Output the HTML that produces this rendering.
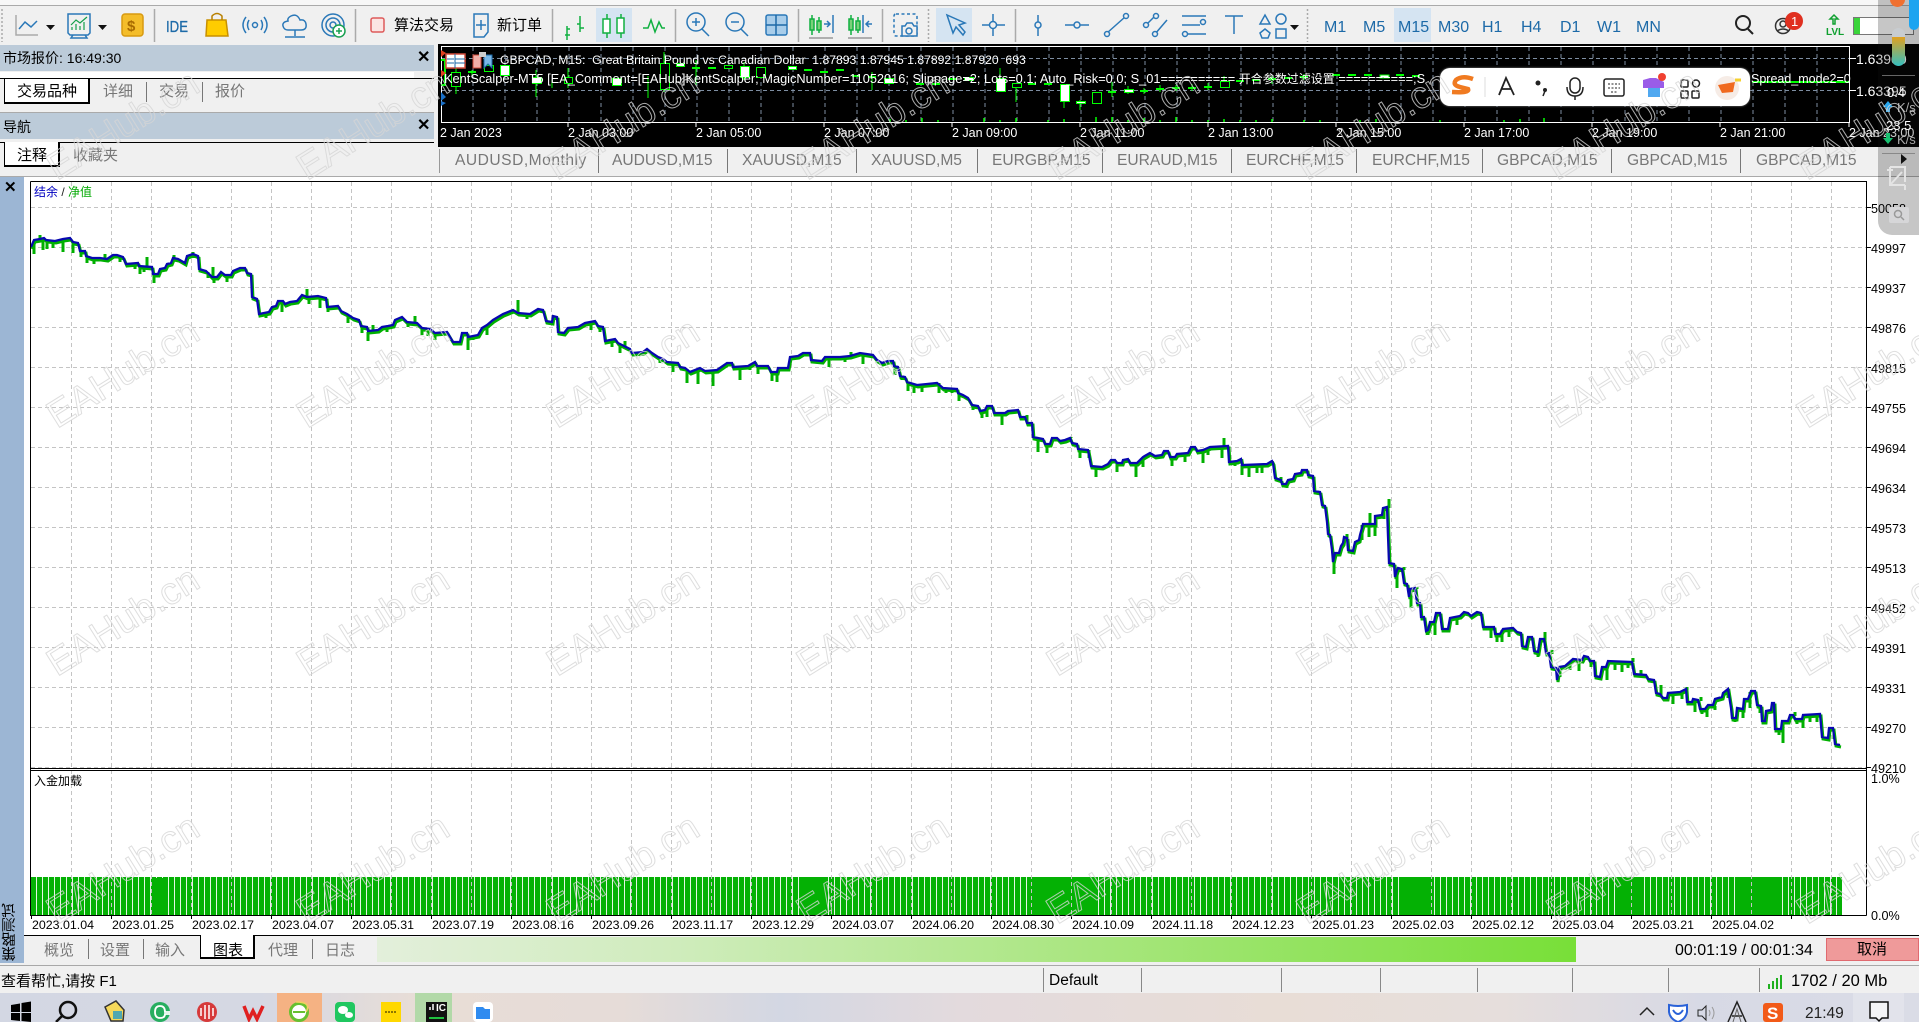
<!DOCTYPE html>
<html lang="zh"><head><meta charset="utf-8"><title>MT5 策略测试</title>
<style>
html,body{margin:0;padding:0;width:1919px;height:1022px;overflow:hidden;background:#f0f0f0}
body{position:relative;font-family:"Liberation Sans","Noto Sans CJK SC",sans-serif;color:#000}
.a{position:absolute}
.t{position:absolute;white-space:nowrap;line-height:1}
.h{position:absolute;left:0;width:434px;height:26px;background:#bccbd9}
.g{color:#777;font-size:15px}
.k{color:#777;font-size:15.600px}
.s{position:absolute;width:1px;background:#777}
.tab{position:absolute;background:#fff;border-right:2px solid #000;border-bottom:2px solid #000;border-left:1px solid #000;box-sizing:border-box}
.tf{font-size:16px;color:#1d6aa8}
.d{font-size:12.400px}
.y{font-size:12.600px;left:1871px}
.c{font-size:12.500px;color:#fff}
svg{position:absolute;overflow:visible}
</style></head><body>

<!-- top strip -->
<div class="a" style="left:0;top:0;width:1919px;height:5px;background:#f7f7f7"></div>
<div class="a" style="left:0;top:5px;width:1919px;height:1px;background:#aaa"></div>

<!-- left panels -->
<div class="h" style="top:45px"></div>
<div class="t" style="left:3px;top:51px;font-size:14px">市场报价: 16:49:30</div>
<div class="t" style="left:417px;top:50px;font-size:16px;font-weight:bold">✕</div>
<div class="a" style="left:0;top:72px;width:414px;height:6px;background:#fff"></div>
<div class="a" style="left:0;top:78px;width:434px;height:1px;background:#000"></div>
<div class="tab" style="left:4px;top:78px;width:86px;height:26px;border-top:1px solid #000"></div>
<div class="t" style="left:17px;top:84px;font-size:15px">交易品种</div>
<div class="t g" style="left:103px;top:84px">详细</div><div class="s" style="left:146px;top:82px;height:20px"></div>
<div class="t g" style="left:159px;top:84px">交易</div><div class="s" style="left:202px;top:82px;height:20px"></div>
<div class="t g" style="left:215px;top:84px">报价</div>
<div class="a" style="left:0;top:112px;width:434px;height:1px;background:#aaa"></div>
<div class="h" style="top:113px"></div>
<div class="t" style="left:3px;top:120px;font-size:14px">导航</div>
<div class="t" style="left:417px;top:118px;font-size:16px;font-weight:bold">✕</div>
<div class="a" style="left:0;top:142px;width:434px;height:1px;background:#000"></div>
<div class="tab" style="left:4px;top:142px;width:56px;height:25px"></div>
<div class="t" style="left:17px;top:148px;font-size:15px">注释</div>
<div class="t g" style="left:73px;top:148px">收藏夹</div>
<div class="a" style="left:0;top:176px;width:1919px;height:1px;background:#aaa"></div>

<!-- toolbar icons -->
<svg width="1919" height="45" viewBox="0 0 1919 45" style="left:0;top:0" fill="none" stroke="#2a78b8" stroke-width="1.500">
<g stroke="#aaa"><path d="M154.500 9V42M355.500 9V42M552.500 9V42M675.500 9V42M798.500 9V42M882.500 9V42M1015.500 9V42"/>
<path d="M928.500 9V42M1307.500 9V42M2 9V42" stroke-dasharray="2 2"/></g>
<path d="M16 15V35H38" stroke="#aaa"/><path d="M19 29L25 22L31 27L37 21"/>
<path d="M46 25h9l-4.500 5z" fill="#111" stroke="none"/>
<path d="M68 14H90V33L88 35H70L68 33ZM71 38H87L85 35H73Z"/><path d="M72 30V27M76 30V24M80 30V26M84 30V22M71 25L76 20L80 23L87 17" stroke="#14a04a" stroke-width="1.200"/>
<path d="M98 25h9l-4.500 5z" fill="#111" stroke="none"/>
<rect x="122" y="14" width="21" height="22" rx="3" fill="#f4bd2a" stroke="#d89a10"/>
<text x="127" y="31" font-size="15" font-weight="bold" fill="#a86a00" stroke="none" font-family="Liberation Sans">$</text>
<text x="166" y="32" font-size="16" fill="#1d6aa8" stroke="#1d6aa8" stroke-width=".3" font-family="Liberation Sans" textLength="22" lengthAdjust="spacingAndGlyphs">IDE</text>
<path d="M207 20H226L228 36H206Z" fill="#ffcc00" stroke="#c89000"/><path d="M212 20V16Q217 11 222 16V20" stroke="#b88000"/>
<circle cx="255" cy="25" r="2.500"/><path d="M249 20Q246 25 249 30M261 20Q264 25 261 30M246 17Q240 25 246 33M264 17Q270 25 264 33"/>
<path d="M288 30H301Q307 30 306 24Q305 19 300 20Q297 13 291 16Q287 18 288 21Q282 22 283 26Q284 30 288 30ZM295 30V36M285 37H305"/>
<circle cx="333" cy="25" r="11"/><circle cx="333" cy="25" r="7"/><circle cx="333" cy="25" r="3"/>
<circle cx="339" cy="31" r="6" fill="#fff" stroke="#18a050"/><path d="M336 31H342M339 28V34" stroke="#18a050"/>
<rect x="371" y="18" width="13" height="14" rx="2" fill="#fbe4e2" stroke="#de5a5a"/>
<path d="M474 14H488V32L484 37H474ZM481 20V30M476 25H486"/>
<path d="M567 26V40M565 35H570M567 29H570M580 16V32M577 24H580M580 28H584" stroke="#10b040"/>
<rect x="596" y="8" width="36" height="34" fill="#d5e4f2" stroke="none"/>
<path d="M607 14V38M621 14V38" stroke="#10b040"/><rect x="603" y="19" width="7" height="14" fill="#fff" stroke="#10b040"/><rect x="617" y="18" width="7" height="15" fill="#fff" stroke="#10b040"/>
<path d="M643 28L648 28L651 20L655 32L659 22L662 28L665 28" stroke="#10b040"/>
<circle cx="696" cy="22" r="9"/><path d="M702 29L709 36M692 22H700M696 18V26"/>
<circle cx="735" cy="22" r="9"/><path d="M741 29L748 36M731 22H739"/>
<rect x="766" y="15" width="21" height="20" rx="2" fill="#a8cdea"/><path d="M776 15V35M766 25H787" stroke="#1d6aa8"/>
<path d="M812 15V35M819 17V33" stroke="#10b040"/><rect x="810" y="19" width="4" height="11" fill="#7ad07a" stroke="#10b040"/><rect x="817" y="21" width="4" height="9" fill="#7ad07a" stroke="#10b040"/><path d="M809 38H833" stroke="#999"/><path d="M824 24H830M827 21L830 24L827 27M833 15V33" />
<path d="M851 15V35M858 17V33" stroke="#10b040"/><rect x="849" y="19" width="4" height="11" fill="#7ad07a" stroke="#10b040"/><rect x="856" y="21" width="4" height="9" fill="#7ad07a" stroke="#10b040"/><path d="M848 38H872" stroke="#999"/><path d="M863 15V33M872 24H866M869 21L866 24L869 27"/>
<rect x="894" y="14" width="23" height="22" rx="2" stroke-dasharray="3 2.500"/><path d="M902 36V26H905L907 23H912L914 26H917V36Z" fill="#f0f0f0"/><circle cx="909" cy="31" r="3"/>
<rect x="936" y="8" width="36" height="34" fill="#d5e4f2" stroke="none"/>
<path d="M947 15L953 33L956 27L963 35L965 32L959 25L965 23Z"/>
<path d="M982 25H1005M993 14V36"/><circle cx="993" cy="25" r="3.500" fill="#f0f0f0"/>
<path d="M1038 15V36"/><circle cx="1038" cy="25" r="3" fill="#f0f0f0"/>
<path d="M1065 25H1089"/><circle cx="1077" cy="25" r="3" fill="#f0f0f0"/>
<path d="M1107 33L1125 17"/><circle cx="1107" cy="34" r="2.500" fill="#f0f0f0"/><circle cx="1126" cy="16" r="2.500" fill="#f0f0f0"/>
<path d="M1145 26L1155 16M1155 34L1167 20"/><circle cx="1146" cy="25" r="2.500" fill="#f0f0f0"/><circle cx="1156" cy="16" r="2.500" fill="#f0f0f0"/><circle cx="1155" cy="34" r="2.500" fill="#f0f0f0"/>
<path d="M1182 16H1206M1182 25H1200M1182 34H1206"/><circle cx="1203" cy="22" r="2.500" fill="#f0f0f0"/><circle cx="1185" cy="34" r="2.500" fill="#f0f0f0"/>
<path d="M1225 16H1243M1234 16V34"/>
<path d="M1260 24L1265 15L1270 24ZM1265 29L1270 33L1268 38H1262L1260 33Z"/><circle cx="1281" cy="19" r="5"/><rect x="1276" y="29" width="10" height="9"/>
<path d="M1290 25h9l-4.500 5z" fill="#111" stroke="none"/>
<rect x="1394" y="8" width="37" height="34" fill="#d5e4f2" stroke="none"/>
<circle cx="1743" cy="23" r="7" stroke="#222" stroke-width="2"/><path d="M1748 29L1753 34" stroke="#222" stroke-width="2"/>
<circle cx="1783" cy="26" r="7.500" stroke="#333"/><circle cx="1783" cy="24" r="3" stroke="#333"/><path d="M1777 31Q1783 27 1789 31" stroke="#333"/>
<circle cx="1794" cy="21" r="9" fill="#e03020" stroke="none"/>
<text x="1791" y="26" font-size="13" fill="#fff" stroke="none" font-family="Liberation Sans">1</text>
<path d="M1833 24V19H1830L1834 15L1838 19H1835V24Z" stroke="#10a030"/>
<text x="1826" y="35" font-size="10" fill="#10a030" stroke="none" font-family="Liberation Sans" font-weight="bold">LVL</text>
<rect x="1853.500" y="17.500" width="60" height="17" fill="#fff" stroke="#777" stroke-width="1"/><rect x="1854" y="18" width="6" height="16" fill="#3ad43a" stroke="none"/>
</svg>
<div class="t tf" style="left:1324px;top:20px">M1</div>
<div class="t tf" style="left:1363px;top:20px">M5</div>
<div class="t tf" style="left:1398px;top:20px">M15</div>
<div class="t tf" style="left:1438px;top:20px">M30</div>
<div class="t tf" style="left:1482px;top:20px">H1</div>
<div class="t tf" style="left:1521px;top:20px">H4</div>
<div class="t tf" style="left:1560px;top:20px">D1</div>
<div class="t tf" style="left:1597px;top:20px">W1</div>
<div class="t tf" style="left:1636px;top:20px">MN</div>
<div class="t" style="left:394px;top:18px;font-size:15px">算法交易</div>
<div class="t" style="left:497px;top:18px;font-size:15px">新订单</div>

<!-- mini chart -->
<div class="a" style="left:438px;top:44px;width:1481px;height:103px;background:#000"></div>
<svg width="1481" height="103" viewBox="438 44 1481 103" style="left:438px;top:44px" fill="none">
<path d="M441 58.500H1849M441 90.500H1849M473 47V122M505 47V122M537 47V122M569 47V122M601 47V122M633 47V122M665 47V122M697 47V122M729 47V122M761 47V122M793 47V122M825 47V122M857 47V122M889 47V122M921 47V122M953 47V122M985 47V122M1017 47V122M1049 47V122M1081 47V122M1113 47V122M1145 47V122M1177 47V122M1209 47V122M1241 47V122M1273 47V122M1305 47V122M1337 47V122M1369 47V122M1401 47V122M1433 47V122M1465 47V122M1497 47V122M1529 47V122M1561 47V122M1593 47V122M1625 47V122M1657 47V122M1689 47V122M1721 47V122M1753 47V122M1785 47V122M1817 47V122" stroke="#7e8ea2" stroke-dasharray="4 3"/>
<path d="M441.500 46.500H1849.500V122.500H441.500Z" stroke="#fff"/>
<path d="M441 122.500H1849M568 122V127M696 122V127M824 122V127M952 122V127M1080 122V127M1208 122V127M1336 122V127M1464 122V127M1592 122V127M1720 122V127M1849 122V127M1850 58.500H1856M1850 90.500H1856" stroke="#fff"/>
<path d="M456 67V94M472 70V75M488 60V72M536 70V97M552 80V88M568 68V88M648 76V98M664 52V92M696 60V85M744 62V80M872 72V90M1000 68V92M1016 83V102M1064 84V108M1080 100V110M1112 82V97M1128 86V94M1144 88V94M1160 85V92M1176 85V91M1192 84V91M1208 83V90M1224 76V88M1272 76V84M1304 74V80" stroke="#00ff00"/>
<path d="M445 60V85H441M445 60H441" stroke="#00ff00" stroke-width="2"/>
<path d="M890 122V119M906 122V120M922 122V118M938 122V120M984 122V118M1000 122V120M1016 122V118M1048 122V120M1064 122V119M1096 122V117M1112 122V117M1128 122V120M1144 122V118M1160 122V120M1176 122V117M1192 122V120M1208 122V120M1224 122V119M1240 122V120M1256 122V120M1272 122V119M1304 122V120M1320 122V120M1360 122V120M1376 122V119M1440 122V120M1504 122V120M1520 122V119M1544 122V118" stroke="#00ff00" stroke-width="1.500"/>
<g stroke="#00ff00" fill="#000">
<rect x="451.500" y="72.500" width="9" height="14"/><rect x="484.500" y="65.500" width="9" height="6"/><rect x="564.500" y="77.500" width="8" height="6"/><rect x="660.500" y="63.500" width="9" height="26"/><rect x="724.500" y="65.500" width="8" height="3"/><rect x="756.500" y="67.500" width="9" height="10"/><rect x="1012.500" y="83.500" width="9" height="4"/><rect x="1092.500" y="92.500" width="9" height="11"/><rect x="1220.500" y="81.500" width="9" height="6"/>
</g>
<g stroke="#00ff00" fill="#fff">
<rect x="500.500" y="65.500" width="9" height="10"/><rect x="532.500" y="77.500" width="9" height="6"/><rect x="612.500" y="78.500" width="9" height="7"/><rect x="676.500" y="63.500" width="8" height="3"/><rect x="740.500" y="66.500" width="9" height="11"/><rect x="788.500" y="66.500" width="8" height="3"/><rect x="884.500" y="78.500" width="9" height="5"/><rect x="964.500" y="77.500" width="9" height="3"/><rect x="996.500" y="78.500" width="9" height="13"/><rect x="1060.500" y="84.500" width="9" height="17"/><rect x="1076.500" y="101.500" width="9" height="2"/><rect x="1124.500" y="89.500" width="9" height="3"/><rect x="1380" y="75" width="9" height="3"/>
</g>
<path d="M468 72H476M692 68H700M708 68H716M804 70H812M820 72H828M836 70H844M852 76H860M868 77H876M916 84H924M932 84H940M948 79H956M1028 84H1036M1044 84H1052M1108 92H1116M1140 91H1148M1156 89H1164M1172 88H1180M1188 88H1196M1204 87H1212M1236 81H1244M1252 80H1260M1268 79H1276M1284 78H1292M1300 77H1308M1332 75H1340M1348 75H1356M1364 75H1372M1396 75H1404M1412 76H1420M1752 82H1849" stroke="#00ff00" stroke-width="2"/>
<rect x="446" y="54" width="19" height="14" fill="#fff" stroke="#d24a3a" stroke-width="1.500"/><path d="M455 54V68M455 59H465M455 63H465M447 59H454M447 63H454" stroke="#1d6aa8"/>
<path d="M473 55H481V68H473Z" fill="#f0b0a8" stroke="#d24a3a"/><path d="M484 55H492V68L488 64L484 68Z" fill="#7ab8e8" stroke="#1d6aa8"/><rect x="479" y="52" width="7" height="5" fill="#ccc"/>
<path d="M441 50L446 53L441 57ZM441 70L446 73L441 77Z" fill="#e04020"/><path d="M441 92L446 97L441 101L446 103L441 106Z" fill="#1a70c8"/>
</svg>
<div class="t c" style="left:500px;top:54px;font-size:12.200px">GBPCAD, M15:&nbsp; Great Britain Pound vs Canadian Dollar&nbsp; 1.87893 1.87945 1.87892 1.87920&nbsp; 693</div>
<div class="t c" style="left:444px;top:73px;font-size:12.800px">KentScalper-MT5 [EA_Comment=[EAHub]KentScalper; MagicNumber=11052016; Slippage=2; Lots=0.1; Auto_Risk=0.0; S_01========== <span style="font-size:12px">开合参数过滤设置</span> ==========;S</div>
<div class="t c" style="left:1751px;top:73px">Spread_mode2=0</div>
<div class="t c" style="left:1856px;top:52px;font-size:14px">1.63900</div>
<div class="t c" style="left:1856px;top:84px;font-size:14px">1.63395</div>
<div class="t c" style="left:440px;top:127px">2 Jan 2023</div>
<div class="t c" style="left:568px;top:127px">2 Jan 03:00</div>
<div class="t c" style="left:696px;top:127px">2 Jan 05:00</div>
<div class="t c" style="left:824px;top:127px">2 Jan 07:00</div>
<div class="t c" style="left:952px;top:127px">2 Jan 09:00</div>
<div class="t c" style="left:1080px;top:127px">2 Jan 11:00</div>
<div class="t c" style="left:1208px;top:127px">2 Jan 13:00</div>
<div class="t c" style="left:1336px;top:127px">2 Jan 15:00</div>
<div class="t c" style="left:1464px;top:127px">2 Jan 17:00</div>
<div class="t c" style="left:1592px;top:127px">2 Jan 19:00</div>
<div class="t c" style="left:1720px;top:127px">2 Jan 21:00</div>
<div class="t c" style="left:1849px;top:127px">2 Jan 23:00</div>

<!-- chart tabs -->
<div class="s" style="left:439px;top:149px;height:24px;background:#999"></div>
<div class="t k" style="left:455px;top:153px;letter-spacing:.5px">AUDUSD,Monthly</div><div class="s" style="left:598px;top:149px;height:24px"></div>
<div class="t k" style="left:612px;top:153px">AUDUSD,M15</div><div class="s" style="left:727px;top:149px;height:24px"></div>
<div class="t k" style="left:742px;top:153px">XAUUSD,M15</div><div class="s" style="left:856px;top:149px;height:24px"></div>
<div class="t k" style="left:871px;top:153px">XAUUSD,M5</div><div class="s" style="left:977px;top:149px;height:24px"></div>
<div class="t k" style="left:992px;top:153px">EURGBP,M15</div><div class="s" style="left:1102px;top:149px;height:24px"></div>
<div class="t k" style="left:1117px;top:153px">EURAUD,M15</div><div class="s" style="left:1231px;top:149px;height:24px"></div>
<div class="t k" style="left:1246px;top:153px">EURCHF,M15</div><div class="s" style="left:1356px;top:149px;height:24px"></div>
<div class="t k" style="left:1372px;top:153px">EURCHF,M15</div><div class="s" style="left:1482px;top:149px;height:24px"></div>
<div class="t k" style="left:1497px;top:153px">GBPCAD,M15</div><div class="s" style="left:1611px;top:149px;height:24px"></div>
<div class="t k" style="left:1627px;top:153px">GBPCAD,M15</div><div class="s" style="left:1740px;top:149px;height:24px"></div>
<div class="t k" style="left:1756px;top:153px">GBPCAD,M15</div>

<!-- tester -->
<div class="a" style="left:0;top:177px;width:24px;height:786px;background:#9cb6d4"></div>
<div class="t" style="left:4px;top:180px;font-size:15px;font-weight:bold">✕</div>
<div class="t" style="left:3px;top:903px;font-size:14.500px;writing-mode:vertical-rl;transform:rotate(180deg)">策略测试</div>
<div class="a" style="left:24px;top:177px;width:1895px;height:758px;background:#fff"></div>
<div class="a" style="left:1866px;top:181px;width:53px;height:754px;background:#fff"></div>

<!-- main plot -->
<div class="a" style="left:31px;top:877px;width:1811px;height:38px;background:repeating-linear-gradient(90deg,#04b104 0 5px,#e4f6e4 5px 6px)"></div>
<div class="a" style="left:152px;top:878px;width:14px;height:37px;background:#04b104"></div>
<div class="a" style="left:800px;top:877px;width:24px;height:38px;background:#04b104"></div>
<div class="a" style="left:1028px;top:877px;width:70px;height:38px;background:#04b104"></div>
<div class="a" style="left:1400px;top:877px;width:30px;height:38px;background:#04b104"></div>
<div class="a" style="left:1620px;top:877px;width:22px;height:38px;background:#04b104"></div>
<div class="a" style="left:1740px;top:877px;width:40px;height:38px;background:#04b104"></div>
<svg width="1919" height="1022" viewBox="0 0 1919 1022" style="left:0;top:0" fill="none">
<path d="M31 207.500H1866M31 247.500H1866M31 287.500H1866M31 327.500H1866M31 367.500H1866M31 407.500H1866M31 447.500H1866M31 487.500H1866M31 527.500H1866M31 567.500H1866M31 607.500H1866M31 647.500H1866M31 687.500H1866M31 727.500H1866M31 767.500H1866" stroke="#c4c4c4" stroke-dasharray="4 3"/>
<path d="M71.500 182V915M111.500 182V915M151.500 182V915M191.500 182V915M231.500 182V915M271.500 182V915M311.500 182V915M351.500 182V915M391.500 182V915M431.500 182V915M471.500 182V915M511.500 182V915M551.500 182V915M591.500 182V915M631.500 182V915M671.500 182V915M711.500 182V915M751.500 182V915M791.500 182V915M831.500 182V915M871.500 182V915M911.500 182V915M951.500 182V915M991.500 182V915M1031.500 182V915M1071.500 182V915M1111.500 182V915M1151.500 182V915M1191.500 182V915M1231.500 182V915M1271.500 182V915M1311.500 182V915M1351.500 182V915M1391.500 182V915M1431.500 182V915M1471.500 182V915M1511.500 182V915M1551.500 182V915M1591.500 182V915M1631.500 182V915M1671.500 182V915M1711.500 182V915M1751.500 182V915M1791.500 182V915M1831.500 182V915" stroke="#c4c4c4" stroke-dasharray="4 3"/>
<defs><path id="c" d="M31 247L34 240L40 239L44 238L46 240L55 241L63 239L70 238L73 242L78 243L80 251L85 251L86 256L92 258L100 258L107 259L113 255L117 255L123 257L126 264L138 263L139 266L152 267L153 274L158 274L160 269L165 268L167 264L171 263L173 258L178 259L185 263L187 256L193 254L198 256L199 269L206 271L212 277L217 277L221 272L225 275L231 275L233 271L240 268L245 268L247 273L251 274L252 297L257 299L259 314L269 312L272 307L276 306L278 301L283 301L285 304L290 302L297 301L302 295L307 297L318 296L326 298L327 307L338 306L341 311L347 314L353 318L359 320L361 326L367 327L368 331L378 330L382 327L388 326L393 325L395 320L402 317L407 322L417 323L422 328L430 329L435 333L447 332L453 342L460 342L462 333L467 333L468 337L478 335L482 328L487 325L493 320L503 314L513 310L518 313L530 314L538 309L543 310L546 321L552 322L553 316L557 317L558 332L564 333L568 328L578 327L585 323L595 321L598 326L603 327L605 341L615 339L618 343L630 349L632 353L643 352L647 349L652 353L658 357L663 359L667 362L678 363L680 367L685 368L690 372L700 368L705 371L717 370L727 363L732 363L733 367L748 366L755 362L757 366L768 366L771 372L777 372L778 368L788 368L790 357L798 356L803 353L810 353L811 360L822 361L825 357L840 357L850 356L860 353L873 355L877 360L882 363L888 361L893 361L894 366L898 367L900 376L905 377L907 382L917 385L927 384L937 383L943 388L957 389L958 393L963 395L968 398L972 405L978 406L980 411L985 410L987 406L992 406L994 413L1005 413L1008 411L1018 410L1020 417L1025 417L1027 423L1032 423L1033 437L1043 439L1045 444L1050 444L1052 438L1057 438L1060 441L1065 440L1070 438L1072 443L1077 444L1078 449L1088 450L1091 466L1102 467L1108 464L1111 460L1115 460L1117 463L1122 463L1123 460L1128 459L1130 463L1137 463L1143 457L1150 453L1155 456L1162 455L1164 451L1168 451L1170 457L1175 457L1177 454L1188 453L1191 447L1195 447L1197 451L1203 450L1210 447L1228 446L1229 462L1237 461L1241 459L1242 465L1267 464L1272 461L1273 463L1275 478L1281 480L1282 484L1286 484L1288 480L1293 479L1295 474L1301 473L1302 470L1307 470L1308 475L1313 476L1314 491L1320 492L1322 505L1325 506L1327 522L1328 534L1330 535L1332 550L1333 562L1335 553L1339 553L1341 546L1343 543L1344 537L1347 538L1348 550L1353 551L1355 542L1359 540L1360 535L1363 524L1375 524L1375 516L1382 515L1383 508L1387 507L1388 536L1389 563L1394 564L1395 577L1397 570L1398 568L1402 569L1404 583L1407 584L1409 597L1410 589L1415 588L1417 603L1420 603L1421 617L1424 617L1426 631L1428 630L1430 622L1434 622L1436 613L1440 613L1442 629L1448 629L1450 618L1460 616L1464 612L1468 613L1471 616L1477 612L1481 613L1483 627L1494 627L1495 634L1500 634L1503 629L1513 628L1517 632L1521 633L1522 646L1526 647L1528 637L1532 637L1534 651L1538 652L1540 639L1544 639L1546 653L1549 653L1551 667L1556 668L1557 680L1559 667L1565 666L1573 659L1582 660L1584 656L1588 657L1590 661L1594 661L1595 676L1600 677L1602 667L1606 667L1608 661L1632 662L1634 674L1646 675L1648 679L1654 680L1656 693L1660 694L1663 698L1667 698L1668 693L1680 692L1686 689L1687 702L1692 702L1693 699L1698 700L1700 709L1705 709L1708 705L1713 705L1715 699L1722 697L1723 693L1728 689L1731 708L1732 718L1736 718L1737 708L1743 709L1744 699L1748 699L1751 691L1755 691L1757 705L1761 706L1762 721L1765 721L1766 711L1771 710L1772 703L1774 703L1775 729L1781 729L1782 721L1788 721L1790 715L1793 715L1795 719L1802 719L1803 715L1820 714L1822 737L1828 738L1829 728L1833 728L1835 744L1840 745"/></defs>
<use href="#c" transform="translate(1 2)" stroke="#00b000" stroke-width="3"/>
<path d="M34 242V254M40 240V235M43 240V250M47 241V249M53 241V248M63 240V252M73 243V253M81 252V257M87 257V263M94 258V264M105 260V254M120 257V262M135 263V269M140 267V274M144 268V272M147 267V257M154 275V283M158 275V277M174 258V255M193 255V252M208 272V278M213 277V267M214 278V283M227 276V282M266 313V318M282 302V312M307 297V289M309 297V304M320 297V308M328 307V312M348 315V323M362 326V333M368 332V341M373 331V325M387 327V332M408 322V327M415 323V316M422 328V335M428 329V336M435 334V340M453 342V343M468 337V350M473 336V340M487 326V335M518 313V300M527 314V319M565 333V335M591 322V330M600 327V332M612 340V347M620 344V353M625 346V341M660 358V363M673 362V372M687 369V383M698 369V384M713 370V386M740 366V380M750 366V370M758 366V374M772 372V381M777 372V382M829 358V367M845 357V362M851 356V352M863 354V364M895 367V375M902 377V380M908 382V391M914 385V393M922 384V392M939 383V393M946 388V393M952 389V393M959 394V401M973 406V410M982 411V418M987 407V417M1002 413V425M1027 423V415M1038 438V452M1047 444V453M1071 438V437M1080 450V458M1089 450V458M1096 467V477M1117 464V472M1136 464V477M1143 458V467M1172 458V466M1185 453V462M1203 451V463M1208 448V455M1222 447V458M1224 446V438M1235 462V466M1242 465V475M1249 465V477M1257 465V473M1262 465V473M1281 480V477M1287 485V488M1334 555V574M1347 538V534M1362 525V540M1369 525V537M1370 524V513M1375 525V536M1384 509V519M1389 508V499M1397 571V588M1404 570V567M1411 590V608M1417 589V587M1428 631V635M1435 623V635M1457 617V625M1491 628V638M1497 635V642M1502 630V642M1509 629V637M1538 652V657M1545 640V632M1552 654V650M1560 668V677M1570 664V670M1579 661V671M1591 662V667M1607 668V680M1615 662V670M1622 662V672M1628 662V668M1633 662V658M1641 676V670M1661 695V685M1673 693V704M1682 692V699M1687 690V687M1695 703V712M1701 701V697M1702 710V714M1707 710V717M1715 706V710M1728 690V698M1735 719V722M1743 710V718M1750 692V708M1760 707V713M1779 730V735M1783 722V743M1795 716V712M1797 720V724M1803 716V728M1810 715V722M1817 715V722M1834 729V739" stroke="#00b000" stroke-width="3"/>
<use href="#c" stroke="#0808b0" stroke-width="2.300"/>
<path d="M30.500 181.500H1866.500V915.500M30.500 181.500V915.500H1866.500" stroke="#000"/>
<path d="M30 768.500H1866" stroke="#000" stroke-width="1"/><path d="M30 770.500H1866" stroke="#000" stroke-width="1"/>
<path d="M1866 207.500H1871M1866 247.500H1871M1866 287.500H1871M1866 327.500H1871M1866 367.500H1871M1866 407.500H1871M1866 447.500H1871M1866 487.500H1871M1866 527.500H1871M1866 567.500H1871M1866 607.500H1871M1866 647.500H1871M1866 687.500H1871M1866 727.500H1871M1866 767.500H1871M31.500 915V919M111.500 915V919M191.500 915V919M271.500 915V919M351.500 915V919M431.500 915V919M511.500 915V919M591.500 915V919M671.500 915V919M751.500 915V919M831.500 915V919M911.500 915V919M991.500 915V919M1071.500 915V919M1151.500 915V919M1231.500 915V919M1311.500 915V919M1391.500 915V919M1471.500 915V919M1551.500 915V919M1631.500 915V919M1711.500 915V919M1791.500 915V919" stroke="#000"/>
</svg>
<div class="t" style="left:34px;top:186px;font-size:12px;color:#0000c0">结余 <span style="color:#222">/</span> <span style="color:#00a800">净值</span></div>
<div class="t" style="left:34px;top:775px;font-size:12px">入金加载</div>
<div class="t y" style="top:203px">50058</div><div class="t y" style="top:243px">49997</div><div class="t y" style="top:283px">49937</div><div class="t y" style="top:323px">49876</div><div class="t y" style="top:363px">49815</div><div class="t y" style="top:403px">49755</div><div class="t y" style="top:443px">49694</div><div class="t y" style="top:483px">49634</div><div class="t y" style="top:523px">49573</div><div class="t y" style="top:563px">49513</div><div class="t y" style="top:603px">49452</div><div class="t y" style="top:643px">49391</div><div class="t y" style="top:683px">49331</div><div class="t y" style="top:723px">49270</div><div class="t y" style="top:763px">49210</div>
<div class="t y" style="top:773px">1.0%</div><div class="t y" style="top:910px">0.0%</div>
<div class="t d" style="left:32px;top:919px">2023.01.04</div><div class="t d" style="left:112px;top:919px">2023.01.25</div><div class="t d" style="left:192px;top:919px">2023.02.17</div><div class="t d" style="left:272px;top:919px">2023.04.07</div><div class="t d" style="left:352px;top:919px">2023.05.31</div><div class="t d" style="left:432px;top:919px">2023.07.19</div><div class="t d" style="left:512px;top:919px">2023.08.16</div><div class="t d" style="left:592px;top:919px">2023.09.26</div><div class="t d" style="left:672px;top:919px">2023.11.17</div><div class="t d" style="left:752px;top:919px">2023.12.29</div><div class="t d" style="left:832px;top:919px">2024.03.07</div><div class="t d" style="left:912px;top:919px">2024.06.20</div><div class="t d" style="left:992px;top:919px">2024.08.30</div><div class="t d" style="left:1072px;top:919px">2024.10.09</div><div class="t d" style="left:1152px;top:919px">2024.11.18</div><div class="t d" style="left:1232px;top:919px">2024.12.23</div><div class="t d" style="left:1312px;top:919px">2025.01.23</div><div class="t d" style="left:1392px;top:919px">2025.02.03</div><div class="t d" style="left:1472px;top:919px">2025.02.12</div><div class="t d" style="left:1552px;top:919px">2025.03.04</div><div class="t d" style="left:1632px;top:919px">2025.03.21</div><div class="t d" style="left:1712px;top:919px">2025.04.02</div>

<!-- tester tabs -->
<div class="a" style="left:24px;top:935px;width:1895px;height:1px;background:#000"></div>
<div class="t g" style="left:44px;top:943px">概览</div><div class="s" style="left:88px;top:939px;height:20px"></div>
<div class="t g" style="left:100px;top:943px">设置</div><div class="s" style="left:143px;top:939px;height:20px"></div>
<div class="t g" style="left:155px;top:943px">输入</div>
<div class="a" style="left:200px;top:935px;width:55px;height:24px;box-sizing:border-box;background:#fff;border-left:1px solid #000;border-right:2px solid #000;border-bottom:2px solid #000"></div>
<div class="t" style="left:213px;top:943px;font-size:15px">图表</div>
<div class="t g" style="left:268px;top:943px">代理</div><div class="s" style="left:312px;top:939px;height:20px"></div>
<div class="t g" style="left:325px;top:943px">日志</div>
<div class="a" style="left:377px;top:937px;width:1199px;height:25px;background:linear-gradient(90deg,#e3efdb,#cfecbc 25%,#a8e67e 60%,#78df38)"></div>
<div class="t" style="left:1675px;top:943px;font-size:16px">00:01:19 / 00:01:34</div>
<div class="a" style="left:1826px;top:938px;width:93px;height:23px;box-sizing:border-box;background:#ef9a9a;border:1px solid #e06a70"></div>
<div class="t" style="left:1857px;top:942px;font-size:15px">取消</div>

<!-- status bar -->
<div class="a" style="left:0;top:965px;width:1919px;height:1px;background:#a8a8a8"></div>
<div class="t" style="left:1px;top:974px;font-size:15px">查看帮忙,请按 F1</div>
<div class="t" style="left:1049px;top:973px;font-size:15.500px">Default</div>
<div class="s" style="left:1043px;top:968px;height:24px;background:#888"></div><div class="s" style="left:1141px;top:968px;height:24px;background:#888"></div><div class="s" style="left:1281px;top:968px;height:24px;background:#888"></div><div class="s" style="left:1380px;top:968px;height:24px;background:#888"></div><div class="s" style="left:1477px;top:968px;height:24px;background:#888"></div><div class="s" style="left:1572px;top:968px;height:24px;background:#888"></div><div class="s" style="left:1668px;top:968px;height:24px;background:#888"></div><div class="s" style="left:1759px;top:968px;height:24px;background:#888"></div>
<svg width="20" height="18" viewBox="0 0 20 18" style="left:1766px;top:972px"><path d="M2 12h2v5H2zM6 9h2v8H6zM10 6h2v11h-2zM14 3h2v14h-2z" fill="#20b020"/></svg>
<div class="t" style="left:1791px;top:973px;font-size:16.500px">1702 / 20 Mb</div>

<!-- taskbar -->
<div class="a" style="left:0;top:993px;width:1919px;height:29px;background:linear-gradient(90deg,#d3d7e3 0,#d5d8e3 260px,#e8ddd6 420px,#e6dcd8 620px,#d3d7e3 780px,#e3dadd 960px,#e8ddd6 1280px,#e6dedc 1500px,#d7d9e5 1700px,#dadce6 1919px)"></div>
<div class="a" style="left:277px;top:993px;width:45px;height:29px;background:#f5b283"></div>
<div class="a" style="left:415px;top:993px;width:37px;height:29px;background:#b2d9a8"></div>
<div class="a" style="left:1853px;top:993px;width:51px;height:29px;background:rgba(255,255,255,.22)"></div>
<svg width="1919" height="29" viewBox="0 993 1919 29" style="left:0;top:993px" fill="none">
<path d="M11 1005L20 1003.500V1012H11ZM21.500 1003L31 1001.500V1012H21.500ZM11 1013H20V1021L11 1020ZM21.500 1013H31V1022L21.500 1021Z" fill="#000"/>
<circle cx="68" cy="1010" r="8" stroke="#111" stroke-width="2.500"/><path d="M62 1016L56 1022" stroke="#111" stroke-width="2.500"/>
<path d="M105 1007L116 1001L124 1010L123 1021L111 1021Z" fill="#f5d85a" stroke="#333" stroke-width="1.500"/><rect x="113" y="1011" width="9" height="8" fill="#50a8b0"/>
<circle cx="160" cy="1012" r="10" fill="#27ae60"/><path d="M160 1006Q155 1006 155 1012Q155 1018 160 1018M160 1006Q165 1006 165 1012H170M160 1018Q165 1018 165 1014H170" stroke="#fff" stroke-width="1.800"/>
<circle cx="207" cy="1012" r="10" fill="#d63a3a"/><path d="M201 1008V1016M205 1005V1019M209 1005V1019M213 1008V1016" stroke="#fff" stroke-width="1.500"/>
<path d="M244 1006L249 1019L253 1011L257 1019L263 1006" stroke="#e02020" stroke-width="3.500"/>
<circle cx="299" cy="1012" r="8.500" stroke="#66c030" stroke-width="3" fill="#fff"/><path d="M293 1012H305" stroke="#66c030" stroke-width="2"/><path d="M296 1002Q312 1002 306 1012" stroke="#f0d060" stroke-width="1.500"/>
<rect x="335" y="1002" width="20" height="20" rx="4" fill="#20c760"/><ellipse cx="343" cy="1010" rx="5" ry="4" fill="#fff"/><ellipse cx="349" cy="1015" rx="4" ry="3" fill="#fff"/>
<rect x="381" y="1002" width="20" height="20" fill="#ffd800"/><path d="M385 1012H397" stroke="#665500" stroke-width="1.500" stroke-dasharray="2 1"/>
<rect x="426" y="1002" width="21" height="20" fill="#111"/><path d="M430 1010V1007M433 1010V1004" stroke="#fff" stroke-width="1.500"/><path d="M429 1018H444" stroke="#20c040" stroke-width="2"/>
<text x="436" y="1011" font-size="10" font-weight="bold" fill="#fff" font-family="Liberation Sans">IC</text>
<rect x="473" y="1002" width="20" height="20" rx="4" fill="#fff"/><path d="M476 1007H483L485 1009H490V1019H476Z" fill="#2f8bf0"/>
<path d="M1640 1015L1647 1008L1654 1015" stroke="#222" stroke-width="1.500"/>
<path d="M1669 1005Q1678 1007 1687 1005V1012Q1686 1019 1678 1022Q1670 1019 1669 1012Z" stroke="#2a62d8" stroke-width="2" fill="#fff"/><path d="M1673 1010Q1678 1018 1683 1010" stroke="#2a62d8" stroke-width="2"/>
<path d="M1698 1010H1702L1706 1006V1020L1702 1016H1698Z" stroke="#222"/><path d="M1709 1010Q1711 1013 1709 1016M1712 1007Q1716 1013 1712 1019" stroke="#999"/>
<path d="M1728 1022L1737 1002L1746 1022M1732 1016H1742" stroke="#222" stroke-width="1.500"/><path d="M1733 1022L1737 1009L1741 1022" stroke="#666"/>
<rect x="1763" y="1003" width="20" height="19" rx="3" fill="#f25a18"/>
<text x="1767" y="1019" font-size="17" font-weight="bold" fill="#fff" font-family="Liberation Sans">S</text>
<path d="M1870 1002H1888V1018H1882L1879 1021L1876 1018H1870Z" stroke="#111" stroke-width="1.500" fill="#f4f4f6"/>
</svg>
<div class="t" style="left:1805px;top:1006px;font-size:15.500px;color:#222">21:49</div>

<!-- sogou bar -->
<div class="a" style="left:1440px;top:68px;width:310px;height:38px;background:#fff;border-radius:10px;box-shadow:0 0 2px #888"></div>
<svg width="310" height="38" viewBox="1440 68 310 38" style="left:1440px;top:68px" fill="none">
<path d="M1473 79Q1462 75 1456 80Q1452 85 1460 87L1468 89Q1470 93 1452 92" stroke="#f07a20" stroke-width="4.500"/>
<path d="M1485 77V97" stroke="#ddd"/>
<path d="M1499 95L1506 78L1514 95M1502 89H1511" stroke="#222" stroke-width="1.800"/>
<circle cx="1538" cy="83" r="2.500" fill="#222"/><circle cx="1545" cy="90" r="2" fill="#222"/><path d="M1545 91L1543 96" stroke="#222" stroke-width="1.500"/>
<rect x="1570" y="78" width="10" height="15" rx="5" stroke="#222" stroke-width="1.500"/><path d="M1567 87Q1567 96 1575 96Q1583 96 1583 87M1575 96V100" stroke="#222" stroke-width="1.500"/>
<rect x="1604" y="79" width="20" height="17" rx="2" stroke="#222" stroke-width="1.500"/><path d="M1608 84H1620M1608 88H1620M1611 92H1617" stroke="#222" stroke-dasharray="2 1.500"/>
<path d="M1643 80L1650 78H1656L1664 82V88H1660V97H1648V88H1643Z" fill="#9a5ce8"/><path d="M1648 88H1660V97H1648Z" fill="#50a8f0"/><circle cx="1662" cy="77" r="4" fill="#f04030"/>
<rect x="1681" y="80" width="7" height="7" rx="1" stroke="#222" stroke-width="1.500"/><circle cx="1696" cy="83.500" r="3.500" stroke="#222" stroke-width="1.500"/><rect x="1681" y="91" width="7" height="7" rx="1" stroke="#222" stroke-width="1.500"/><rect x="1692" y="91" width="7" height="7" rx="1" stroke="#222" stroke-width="1.500"/>
<circle cx="1727" cy="88" r="12" fill="#f6ece6"/><path d="M1718 85L1735 82L1733 92L1722 93Z" fill="#f06a20"/><path d="M1735 80L1741 80" stroke="#f4d030" stroke-width="3"/>
</svg>

<!-- right floating panel -->
<div class="a" style="left:1878px;top:0;width:41px;height:235px;background:rgba(15,15,18,.24);border-radius:0 0 0 14px"></div>
<div class="a" style="left:1909px;top:0;width:10px;height:30px;background:#1ca4f0;border-radius:0 0 5px 5px"></div>
<div class="a" style="left:1890px;top:-8px;width:15px;height:15px;background:#f07030;border-radius:50%"></div>
<div class="a" style="left:1892px;top:28px;width:13px;height:38px;background:linear-gradient(#c8ccd0 0 9px,#e0a020 9px,#35c0c0);border-radius:7px"></div>
<div class="a" style="left:1882px;top:75px;width:33px;height:1px;background:#666"></div>
<div class="t" style="left:1887px;top:86px;font-size:13px;color:#fff">0.4</div>
<div class="t" style="left:1886px;top:119px;font-size:13px;color:#fff">23.5</div>
<div class="t" style="left:1897px;top:101px;font-size:13px;color:#aaa">K/s</div>
<div class="t" style="left:1897px;top:133px;font-size:13px;color:#aaa">K/s</div>
<svg width="41" height="235" viewBox="1878 0 41 235" style="left:1878px;top:0" fill="none">
<path d="M1883 107L1888 101L1893 107H1890V112H1886V107Z" fill="#28a8f0"/>
<path d="M1883 138L1888 144L1893 138H1890V133H1886V138Z" fill="#18c070"/>
<path d="M1882 153.500H1915" stroke="#888"/>
<path d="M1901 154L1907 159L1901 164Z" fill="#111"/>
<path d="M1890 167H1905V182M1890 167V185H1905M1887 170H1893M1905 185V190M1890 185L1902 172" stroke="#e4e4e4" stroke-width="2"/>
<rect x="1889" y="207" width="20" height="16" rx="2" fill="#d6d6d8"/><circle cx="1898" cy="214" r="3.500" stroke="#999" stroke-width="1.500"/><path d="M1901 217L1904 220" stroke="#999" stroke-width="1.500"/>
</svg>

<!-- watermark -->
<svg width="1919" height="1022" viewBox="0 0 1919 1022" style="left:0;top:0;pointer-events:none" fill="none" stroke="#d6d6d6" stroke-width="1" font-family="Liberation Sans" font-size="38" opacity=".8">
<text transform="translate(57 181) rotate(-32)">EAHub.cn</text><text transform="translate(307 181) rotate(-32)">EAHub.cn</text><text transform="translate(557 181) rotate(-32)">EAHub.cn</text><text transform="translate(807 181) rotate(-32)">EAHub.cn</text><text transform="translate(1057 181) rotate(-32)">EAHub.cn</text><text transform="translate(1307 181) rotate(-32)">EAHub.cn</text><text transform="translate(1557 181) rotate(-32)">EAHub.cn</text><text transform="translate(1807 181) rotate(-32)">EAHub.cn</text>
<text transform="translate(57 429) rotate(-32)">EAHub.cn</text><text transform="translate(307 429) rotate(-32)">EAHub.cn</text><text transform="translate(557 429) rotate(-32)">EAHub.cn</text><text transform="translate(807 429) rotate(-32)">EAHub.cn</text><text transform="translate(1057 429) rotate(-32)">EAHub.cn</text><text transform="translate(1307 429) rotate(-32)">EAHub.cn</text><text transform="translate(1557 429) rotate(-32)">EAHub.cn</text><text transform="translate(1807 429) rotate(-32)">EAHub.cn</text>
<text transform="translate(57 677) rotate(-32)">EAHub.cn</text><text transform="translate(307 677) rotate(-32)">EAHub.cn</text><text transform="translate(557 677) rotate(-32)">EAHub.cn</text><text transform="translate(807 677) rotate(-32)">EAHub.cn</text><text transform="translate(1057 677) rotate(-32)">EAHub.cn</text><text transform="translate(1307 677) rotate(-32)">EAHub.cn</text><text transform="translate(1557 677) rotate(-32)">EAHub.cn</text><text transform="translate(1807 677) rotate(-32)">EAHub.cn</text>
<text transform="translate(57 925) rotate(-32)">EAHub.cn</text><text transform="translate(307 925) rotate(-32)">EAHub.cn</text><text transform="translate(557 925) rotate(-32)">EAHub.cn</text><text transform="translate(807 925) rotate(-32)">EAHub.cn</text><text transform="translate(1057 925) rotate(-32)">EAHub.cn</text><text transform="translate(1307 925) rotate(-32)">EAHub.cn</text><text transform="translate(1557 925) rotate(-32)">EAHub.cn</text><text transform="translate(1807 925) rotate(-32)">EAHub.cn</text>
</svg>
</body></html>
